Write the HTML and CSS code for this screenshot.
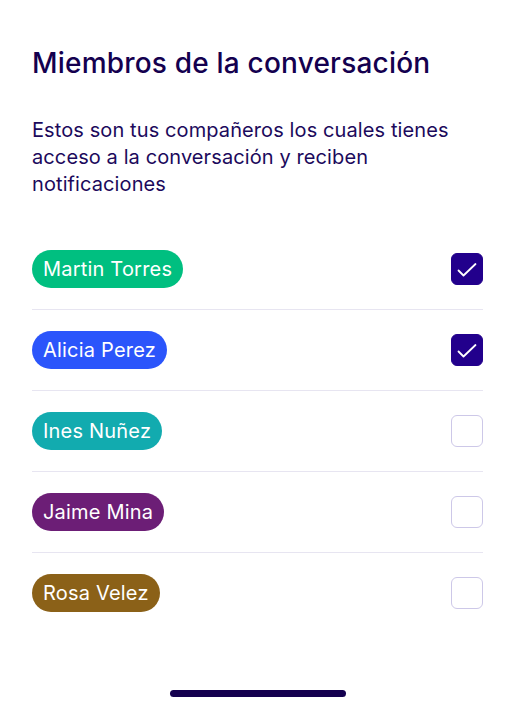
FILE: index.html
```html
<!DOCTYPE html>
<html>
    <head>
        <meta charset="utf-8">
        <title>Miembros de la conversación</title>
        <link rel="stylesheet" href="styles.css">
    </head>
    <body>
    <div id="screen">
        <h1 class="title">Miembros de la conversación</h1>
        <p class="intro">Estos son tus compañeros los cuales tienes acceso a la conversación y reciben notificaciones</p>
        <ul class="members">
            <li class="member">
                <span class="pill green">Martin Torres</span>
                <span class="check on"><svg viewBox="0 0 32 32"><path d="M7.5 17.5l5 5 12-11.5"/></svg></span>
            </li>
            <li class="member">
                <span class="pill blue">Alicia Perez</span>
                <span class="check on"><svg viewBox="0 0 32 32"><path d="M7.5 17.5l5 5 12-11.5"/></svg></span>
            </li>
            <li class="member">
                <span class="pill teal">Ines Nuñez</span>
                <span class="check"></span>
            </li>
            <li class="member">
                <span class="pill purple">Jaime Mina</span>
                <span class="check"></span>
            </li>
            <li class="member">
                <span class="pill brown">Rosa Velez</span>
                <span class="check"></span>
            </li>
        </ul>
        <div class="home"></div>
    </div>
    </body>
</html>
```

FILE: styles.css
```css
body{
    margin: 0;
    background: #fff;
    font-family: Inter, "Noto Sans", sans-serif;
    color: #14004f;
}
#screen{
    height: 710px;
    padding: 0 31px 0 32px;
    display: flex;
    flex-direction: column;
    box-sizing: border-box;
}
.title{
    margin: 44px 0 0;
    font-size: 28px;
    font-weight: 500;
    letter-spacing: 0.2px;
    line-height: 38px;
}
.intro{
    margin: 35px 0 0;
    font-size: 20px;
    letter-spacing: 0.1px;
    line-height: 27px;
    color: #1c0a5c;
}
.members{
    list-style: none;
    margin: 31px 0 0;
    padding: 0;
}
.member{
    display: flex;
    align-items: center;
    justify-content: space-between;
    height: 80px;
    border-bottom: 1px solid #e7e5f1;
}
.member:last-child{
    border-bottom: none;
}
.pill{
    height: 38px;
    line-height: 38px;
    padding: 0 11px;
    border-radius: 19px;
    color: #fff;
    font-size: 20px;
    letter-spacing: 0.2px;
}
.green{ background: #00bf80; }
.blue{ background: #2b55fb; }
.teal{ background: #12abaf; }
.purple{ background: #6c1e76; }
.brown{ background: #8b6118; }
.check{
    width: 32px;
    height: 32px;
    box-sizing: border-box;
    border: 1.5px solid #cdc8e8;
    border-radius: 6px;
    display: flex;
}
.check.on{
    background: #22008c;
    border-color: #22008c;
}
.check svg{
    width: 32px;
    height: 32px;
    margin: -1.5px;
    fill: none;
    stroke: #fff;
    stroke-width: 1.8;
    stroke-linecap: round;
    stroke-linejoin: round;
}
.home{
    margin: auto auto 13px;
    width: 176px;
    height: 7px;
    border-radius: 4px;
    background: #14004f;
}
```
